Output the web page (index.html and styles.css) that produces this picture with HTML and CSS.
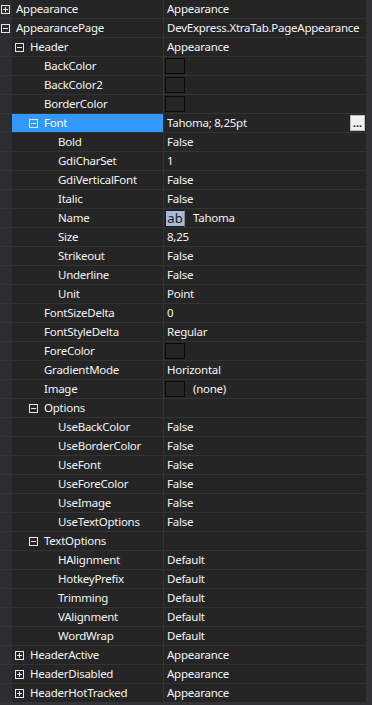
FILE: index.html
```html
<!DOCTYPE html>
<html>
<head>
<meta charset="utf-8">
<link rel="stylesheet" href="styles.css">
</head>
<body>
<div class="grid">
  <div class="row"><div class="name d0"><span class="exp plus"></span><span>Appearance</span></div><div class="val">Appearance</div></div>
  <div class="row"><div class="name d0"><span class="exp minus"></span><span>AppearancePage</span></div><div class="val">DevExpress.XtraTab.PageAppearance</div></div>
  <div class="row"><div class="name d1"><span class="exp minus"></span><span>Header</span></div><div class="val">Appearance</div></div>
  <div class="row"><div class="name d2"><span class="sp"></span><span>BackColor</span></div><div class="val"><span class="swatch"></span></div></div>
  <div class="row"><div class="name d2"><span class="sp"></span><span>BackColor2</span></div><div class="val"><span class="swatch"></span></div></div>
  <div class="row"><div class="name d2"><span class="sp"></span><span>BorderColor</span></div><div class="val"><span class="swatch"></span></div></div>
  <div class="row sel"><div class="name d2"><span class="exp minus"></span><span>Font</span></div><div class="val"><span class="grow">Tahoma; 8,25pt</span><span class="btn">...</span></div></div>
  <div class="row"><div class="name d3"><span class="sp"></span><span>Bold</span></div><div class="val">False</div></div>
  <div class="row"><div class="name d3"><span class="sp"></span><span>GdiCharSet</span></div><div class="val">1</div></div>
  <div class="row"><div class="name d3"><span class="sp"></span><span>GdiVerticalFont</span></div><div class="val">False</div></div>
  <div class="row"><div class="name d3"><span class="sp"></span><span>Italic</span></div><div class="val">False</div></div>
  <div class="row"><div class="name d3"><span class="sp"></span><span>Name</span></div><div class="val"><span class="ab">ab</span><span class="after">Tahoma</span></div></div>
  <div class="row"><div class="name d3"><span class="sp"></span><span>Size</span></div><div class="val">8,25</div></div>
  <div class="row"><div class="name d3"><span class="sp"></span><span>Strikeout</span></div><div class="val">False</div></div>
  <div class="row"><div class="name d3"><span class="sp"></span><span>Underline</span></div><div class="val">False</div></div>
  <div class="row"><div class="name d3"><span class="sp"></span><span>Unit</span></div><div class="val">Point</div></div>
  <div class="row"><div class="name d2"><span class="sp"></span><span>FontSizeDelta</span></div><div class="val">0</div></div>
  <div class="row"><div class="name d2"><span class="sp"></span><span>FontStyleDelta</span></div><div class="val">Regular</div></div>
  <div class="row"><div class="name d2"><span class="sp"></span><span>ForeColor</span></div><div class="val"><span class="swatch"></span></div></div>
  <div class="row"><div class="name d2"><span class="sp"></span><span>GradientMode</span></div><div class="val">Horizontal</div></div>
  <div class="row"><div class="name d2"><span class="sp"></span><span>Image</span></div><div class="val"><span class="swatch"></span><span class="after">(none)</span></div></div>
  <div class="row"><div class="name d2"><span class="exp minus"></span><span>Options</span></div><div class="val"></div></div>
  <div class="row"><div class="name d3"><span class="sp"></span><span>UseBackColor</span></div><div class="val">False</div></div>
  <div class="row"><div class="name d3"><span class="sp"></span><span>UseBorderColor</span></div><div class="val">False</div></div>
  <div class="row"><div class="name d3"><span class="sp"></span><span>UseFont</span></div><div class="val">False</div></div>
  <div class="row"><div class="name d3"><span class="sp"></span><span>UseForeColor</span></div><div class="val">False</div></div>
  <div class="row"><div class="name d3"><span class="sp"></span><span>UseImage</span></div><div class="val">False</div></div>
  <div class="row"><div class="name d3"><span class="sp"></span><span>UseTextOptions</span></div><div class="val">False</div></div>
  <div class="row"><div class="name d2"><span class="exp minus"></span><span>TextOptions</span></div><div class="val"></div></div>
  <div class="row"><div class="name d3"><span class="sp"></span><span>HAlignment</span></div><div class="val">Default</div></div>
  <div class="row"><div class="name d3"><span class="sp"></span><span>HotkeyPrefix</span></div><div class="val">Default</div></div>
  <div class="row"><div class="name d3"><span class="sp"></span><span>Trimming</span></div><div class="val">Default</div></div>
  <div class="row"><div class="name d3"><span class="sp"></span><span>VAlignment</span></div><div class="val">Default</div></div>
  <div class="row"><div class="name d3"><span class="sp"></span><span>WordWrap</span></div><div class="val">Default</div></div>
  <div class="row"><div class="name d1"><span class="exp plus"></span><span>HeaderActive</span></div><div class="val">Appearance</div></div>
  <div class="row"><div class="name d1"><span class="exp plus"></span><span>HeaderDisabled</span></div><div class="val">Appearance</div></div>
  <div class="row"><div class="name d1"><span class="exp plus"></span><span>HeaderHotTracked</span></div><div class="val">Appearance</div></div>
</div>
</body>
</html>
```
FILE: styles.css
```css
html, body {
  margin: 0;
  padding: 0;
  background: #333337;
}
body {
  width: 372px;
  height: 705px;
  overflow: hidden;
  font-family: "Noto Sans", "Open Sans", sans-serif;
  font-size: 11.5px;
  letter-spacing: -0.25px;
  color: #f4f4f4;
}
.grid {
  width: 366px;
  display: flex;
  flex-direction: column;
}
.row {
  display: grid;
  grid-template-columns: 163px 1px 1fr;
  height: 19px;
  box-sizing: border-box;
  border-bottom: 1px solid #333337;
  background: #252526;
}
.row::before {
  content: "";
  grid-column: 2;
  grid-row: 1;
  background: #333337;
}
.name {
  grid-column: 1;
  grid-row: 1;
  display: flex;
  align-items: center;
  background: linear-gradient(to right, #2d2d30 0 12px, #252526 12px);
  line-height: 18px;
  white-space: nowrap;
}
.sel .name {
  background: linear-gradient(to right, #2d2d30 0 12px, #3399ff 12px);
  color: #ffffff;
}
.d0 { padding-left: 1px; }
.d1 { padding-left: 15px; }
.d2 { padding-left: 29px; }
.d3 { padding-left: 43px; }
.exp {
  width: 9px;
  height: 9px;
  box-sizing: border-box;
  border: 1px solid #e6e6e6;
  margin-right: 6px;
  position: relative;
  flex: none;
}
.exp::before {
  content: "";
  position: absolute;
  left: 1px;
  top: 3px;
  width: 5px;
  height: 1px;
  background: #e6e6e6;
}
.plus::after {
  content: "";
  position: absolute;
  left: 3px;
  top: 1px;
  width: 1px;
  height: 5px;
  background: #e6e6e6;
}
.sp {
  width: 15px;
  flex: none;
}
.val {
  grid-column: 3;
  grid-row: 1;
  display: flex;
  align-items: center;
  padding-left: 3px;
  line-height: 18px;
  white-space: nowrap;
}
.grow { flex: 1; }
.swatch {
  width: 20px;
  height: 16px;
  box-sizing: border-box;
  border: 1px solid #0a0a0a;
  margin-left: -2px;
  flex: none;
}
.after { margin-left: 8px; }
.ab {
  width: 20px;
  height: 17px;
  box-sizing: border-box;
  margin-left: -2px;
  background: #a7bad6;
  border: 1px solid #151a22;
  border-right: 1px solid #8a8a8a;
  color: #141c2c;
  font-size: 13px;
  letter-spacing: 0;
  line-height: 14px;
  text-align: center;
  flex: none;
}
.btn {
  width: 15px;
  height: 16px;
  box-sizing: border-box;
  margin-right: 1px;
  background: #f0f0f0;
  border: 1px solid #bdbdbd;
  color: #1a1a1a;
  font-size: 11px;
  font-weight: bold;
  line-height: 16px;
  letter-spacing: 0;
  display: flex;
  justify-content: center;
  align-items: center;
  flex: none;
}
```
